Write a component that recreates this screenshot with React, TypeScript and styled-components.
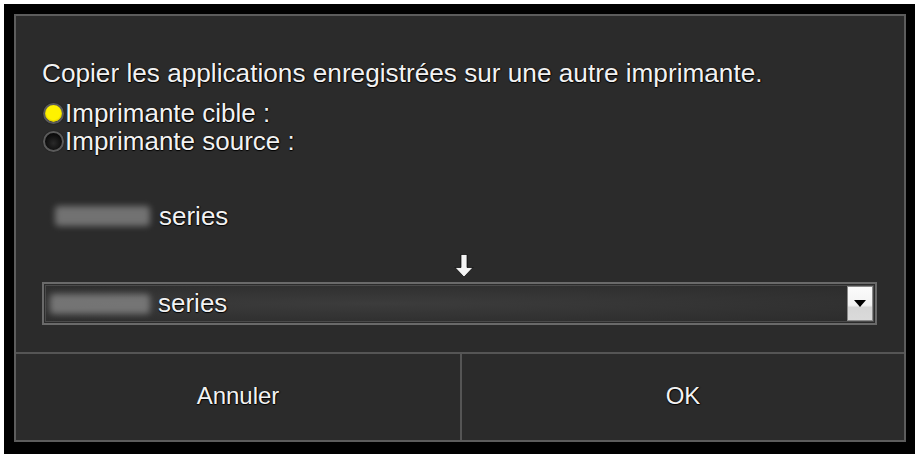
import React from "react";
import styled, { createGlobalStyle } from "styled-components";

const Global = createGlobalStyle`
  html, body { margin: 0; padding: 0; background: #ffffff; }
  body { width: 915px; height: 454px; overflow: hidden; }
`;

const Frame = styled.div`
  box-sizing: border-box;
  margin: 4px 0 0 4px;
  width: 911px;
  height: 450px;
  background: #000;
  padding: 10px 9px 12px 10px;
`;

const Dialog = styled.div`
  box-sizing: border-box;
  height: 100%;
  border: 2px solid #5c5c5c;
  background: #2b2b2b;
  display: flex;
  flex-direction: column;
  font-family: "Liberation Sans", Arial, sans-serif;
  color: #f2f2f2;
  text-shadow: 0 1px 1px #000, 1px 0 1px #000;
`;

const Body = styled.div`
  flex: 1;
  padding: 42px 27px 0 26px;
  display: flex;
  flex-direction: column;
`;

const Title = styled.div`
  font-size: 26.2px;
  line-height: 30px;
  white-space: nowrap;
`;

const RadioRow = styled.label<{ $first?: boolean }>`
  display: flex;
  align-items: center;
  gap: 1px;
  font-size: 26px;
  line-height: 28px;
  margin-left: 1px;
  margin-top: ${(p) => (p.$first ? "11px" : "0")};
`;

const RadioDot = styled.span<{ $on?: boolean }>`
  box-sizing: border-box;
  width: 21px;
  height: 21px;
  border-radius: 50%;
  border: 2px solid #5a5a5a;
  background: ${(p) =>
    p.$on
      ? "radial-gradient(circle at 50% 45%, #fff200 0 55%, #d8c800 70%, #222 74%)"
      : "radial-gradient(circle at 50% 60%, #2a2a2a 0, #0a0a0a 70%)"};
  box-shadow: 0 0 1px #000;
`;

const Source = styled.div`
  margin-top: 46px;
  margin-left: 13px;
  display: flex;
  align-items: center;
  gap: 9px;
  font-size: 26px;
  line-height: 30px;
`;

const Blur = styled.span<{ $w: number }>`
  display: inline-block;
  width: ${(p) => p.$w}px;
  height: 20px;
  background: #8a8a8a;
  border-radius: 4px;
  filter: blur(3px);
  opacity: 0.75;
`;

const ArrowRow = styled.div`
  display: flex;
  justify-content: center;
  margin-top: 23px;
  padding-left: 8px;
  height: 28px;
`;

const Select = styled.div`
  box-sizing: border-box;
  height: 43px;
  border: 2px solid #6a6a6a;
  padding: 1px;
  display: flex;
`;

const SelectInner = styled.div`
  flex: 1;
  border: 1px solid #4a4a4a;
  background: radial-gradient(ellipse at 40% 50%, #3c3c3c 0%, #323232 60%, #2c2c2c 100%);
  display: flex;
  align-items: center;
  padding: 0 0 0 4px;
  font-size: 26px;
`;

const SelectText = styled.span`
  flex: 1;
  display: flex;
  align-items: center;
  gap: 8px;
`;

const DropBtn = styled.span`
  box-sizing: border-box;
  align-self: stretch;
  width: 26px;
  background: linear-gradient(#fbfbfb 0%, #f2f2f2 55%, #d6d6d6 62%, #dadada 100%);
  border: 1px solid #8a8a8a;
  display: flex;
  align-items: center;
  justify-content: center;
`;

const Footer = styled.div`
  height: 86px;
  border-top: 2px solid #555;
  display: grid;
  grid-template-columns: 444px 2px 1fr;
`;

const Divider = styled.div`
  background: #555;
`;

const FooterBtn = styled.div`
  display: flex;
  align-items: center;
  justify-content: center;
  font-size: 24px;
  padding-bottom: 2px;
`;

export default function App() {
  return (
    <>
      <Global />
      <Frame>
        <Dialog>
          <Body>
            <Title>Copier les applications enregistrées sur une autre imprimante.</Title>
            <RadioRow $first>
              <RadioDot $on />
              Imprimante cible :
            </RadioRow>
            <RadioRow>
              <RadioDot />
              Imprimante source :
            </RadioRow>
            <Source>
              <Blur $w={95} />
              series
            </Source>
            <ArrowRow>
              <svg width="20" height="24" viewBox="0 0 20 24">
                <path d="M7 0.5h6v13h6l-9 9.5-9-9.5h6z" fill="#f4f4f4" stroke="#000" strokeWidth="0.7" />
              </svg>
            </ArrowRow>
            <Select>
              <SelectInner>
                <SelectText>
                  <Blur $w={100} />
                  series
                </SelectText>
                <DropBtn>
                  <svg width="12" height="7" viewBox="0 0 12 7">
                    <path d="M0 0h12L6 7z" fill="#000" />
                  </svg>
                </DropBtn>
              </SelectInner>
            </Select>
          </Body>
          <Footer>
            <FooterBtn>Annuler</FooterBtn>
            <Divider />
            <FooterBtn>OK</FooterBtn>
          </Footer>
        </Dialog>
      </Frame>
    </>
  );
}
